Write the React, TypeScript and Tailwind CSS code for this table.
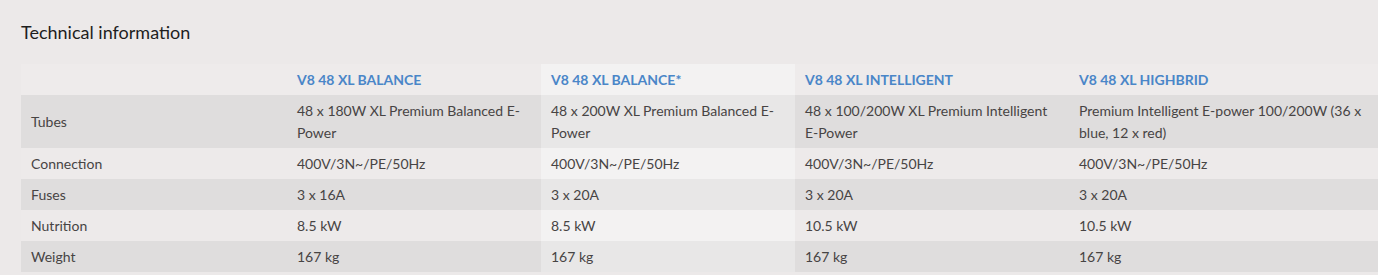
const models = [
  "V8 48 XL BALANCE",
  "V8 48 XL BALANCE*",
  "V8 48 XL INTELLIGENT",
  "V8 48 XL HIGHBRID",
];

const rows: { label: string; values: string[] }[] = [
  {
    label: "Tubes",
    values: [
      "48 x 180W XL Premium Balanced E-Power",
      "48 x 200W XL Premium Balanced E-Power",
      "48 x 100/200W XL Premium Intelligent E-Power",
      "Premium Intelligent E-power 100/200W (36 x blue, 12 x red)",
    ],
  },
  {
    label: "Connection",
    values: ["400V/3N~/PE/50Hz", "400V/3N~/PE/50Hz", "400V/3N~/PE/50Hz", "400V/3N~/PE/50Hz"],
  },
  { label: "Fuses", values: ["3 x 16A", "3 x 20A", "3 x 20A", "3 x 20A"] },
  { label: "Nutrition", values: ["8.5 kW", "8.5 kW", "10.5 kW", "10.5 kW"] },
  { label: "Weight", values: ["167 kg", "167 kg", "167 kg", "167 kg"] },
];

const cols = "grid grid-cols-[266px_254px_254px_274px_309px]";

export default function App() {
  return (
    <div className="h-[275px] w-[1378px] overflow-hidden bg-[#ece9e9] font-['Lato',sans-serif] text-[14px]">
      <h2 className="px-[21px] pt-[20px] text-[18px] leading-[24px] text-[#1e1e1e]">
        Technical information
      </h2>

      <div className="ml-[21px] mt-[20px]">
        <div className={`${cols} bg-[#eeebeb]`}>
          <div />
          {models.map((m, i) => (
            <div
              key={m}
              className={`px-[10px] pt-[5px] pb-[4px] font-bold leading-[22px] text-[#4a86c8] ${
                i === 1 ? "bg-[#f3f2f2]" : ""
              }`}
            >
              {m}
            </div>
          ))}
        </div>

        {rows.map((row, r) => {
          const dark = r % 2 === 0;
          return (
            <div
              key={row.label}
              className={`${cols} items-stretch leading-[22px] text-[#474444] ${
                dark ? "bg-[#dfdddd]" : "bg-[#edeaea]"
              }`}
            >
              <div className="flex items-center px-[10px] pt-[5px] pb-[4px]">{row.label}</div>
              {row.values.map((v, i) => (
                <div
                  key={i}
                  className={`px-[10px] pt-[5px] pb-[4px] ${
                    i === 1 ? (dark ? "bg-[#e8e7e7]" : "bg-[#f3f2f2]") : ""
                  }`}
                >
                  {v}
                </div>
              ))}
            </div>
          );
        })}
      </div>
    </div>
  );
}
